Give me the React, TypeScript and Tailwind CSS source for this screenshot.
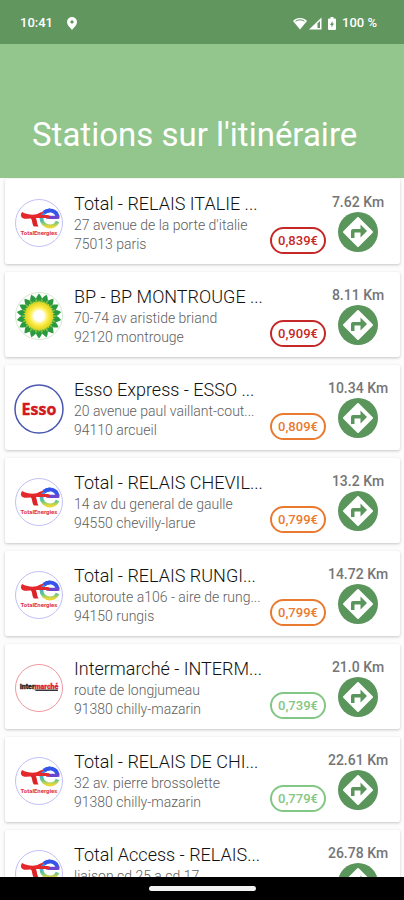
import React from 'react';
import clsx from 'clsx';

type Brand = 'total' | 'bp' | 'esso' | 'intermarche';
type Level = 'high' | 'medium' | 'low';

interface Station {
  name: string;
  street: string;
  city: string;
  distance: string;
  price: string;
  level: Level;
  brand: Brand;
}

const stations: Station[] = [
  {
    name: 'Total - RELAIS ITALIE ...',
    street: "27 avenue de la porte d'italie",
    city: '75013 paris',
    distance: '7.62 Km',
    price: '0,839€',
    level: 'high',
    brand: 'total',
  },
  {
    name: 'BP - BP MONTROUGE ...',
    street: '70-74 av aristide briand',
    city: '92120 montrouge',
    distance: '8.11 Km',
    price: '0,909€',
    level: 'high',
    brand: 'bp',
  },
  {
    name: 'Esso Express - ESSO ...',
    street: '20 avenue paul vaillant-cout...',
    city: '94110 arcueil',
    distance: '10.34 Km',
    price: '0,809€',
    level: 'medium',
    brand: 'esso',
  },
  {
    name: 'Total - RELAIS CHEVIL...',
    street: '14 av du general de gaulle',
    city: '94550 chevilly-larue',
    distance: '13.2 Km',
    price: '0,799€',
    level: 'medium',
    brand: 'total',
  },
  {
    name: 'Total - RELAIS RUNGI...',
    street: 'autoroute a106 - aire de rung...',
    city: '94150 rungis',
    distance: '14.72 Km',
    price: '0,799€',
    level: 'medium',
    brand: 'total',
  },
  {
    name: 'Intermarché - INTERM...',
    street: 'route de longjumeau',
    city: '91380 chilly-mazarin',
    distance: '21.0 Km',
    price: '0,739€',
    level: 'low',
    brand: 'intermarche',
  },
  {
    name: 'Total - RELAIS DE CHI...',
    street: '32 av. pierre brossolette',
    city: '91380 chilly-mazarin',
    distance: '22.61 Km',
    price: '0,779€',
    level: 'low',
    brand: 'total',
  },
  {
    name: 'Total Access - RELAIS...',
    street: 'liaison cd 25 a cd 17',
    city: '91380 chilly-mazarin',
    distance: '26.78 Km',
    price: '0,779€',
    level: 'low',
    brand: 'total',
  },
];

const priceColors: Record<Level, string> = {
  high: 'border-[#c62828] text-[#c62828]',
  medium: 'border-[#ea7a30] text-[#ea7a30]',
  low: 'border-[#82c784] text-[#82c784]',
};

function TotalLogo() {
  return (
    <svg viewBox="0 0 50 50" className="size-[50px]" aria-label="TotalEnergies">
      <defs>
        <linearGradient id="total-left" x1="0" y1="0" x2="0" y2="1">
          <stop offset="0" stopColor="#3b6df0" />
          <stop offset="0.4" stopColor="#45a9e4" />
          <stop offset="0.7" stopColor="#5cc493" />
          <stop offset="1" stopColor="#e6d838" />
        </linearGradient>
      </defs>
      <circle cx="25" cy="25" r="23.5" fill="#fff" stroke="#c3c0f4" />
      <path
        d="M36 12.500a8.500 8 0 0 0 0 16c3.500 0 6-1.500 7.500-5"
        fill="none"
        stroke="url(#total-left)"
        strokeWidth="3.800"
      />
      <path
        d="M30 14.500c5-4 13-2 13.500 4.500"
        fill="none"
        stroke="#3454ea"
        strokeWidth="3.800"
      />
      <path d="M32 17.500c5 .6 8 .2 13.400-.3v3.500c-6 .6-9 .2-13.400-.3z" fill="#6a45d0" />
      <path
        d="M8 14c-2.500 4-.5 7 4.500 6.800 8-.3 15-1.300 23-.3v-3c-3-.6-6-.5-8.500-.2l3-3.500c-4 0-5.500 2.500-9 2.800-4.500.3-9-.3-13-2.600z"
        fill="#e5282c"
      />
      <path d="M16 19.500c3 2 1.500 6.500 4 9h4.500c-2-3-1-6-3-9z" fill="#dc2428" />
      <text
        x="25"
        y="37"
        textAnchor="middle"
        fontSize="6"
        fontWeight="700"
        fill="#e0343c"
        fontFamily="Roboto, sans-serif"
      >
        TotalEnergies
      </text>
    </svg>
  );
}

function BpLogo() {
  const ring = (count: number, offset: number) =>
    Array.from({ length: count }, (_, i) => (i * 360) / count + offset);

  return (
    <svg viewBox="0 0 50 50" className="size-[50px]" aria-label="BP">
      <defs>
        <radialGradient id="bp-sun">
          <stop offset="0.35" stopColor="#fff" />
          <stop offset="0.6" stopColor="#fdf05a" />
          <stop offset="0.85" stopColor="#f0dc28" />
          <stop offset="1" stopColor="#d0d62e" />
        </radialGradient>
      </defs>
      <circle cx="25" cy="25" r="23.5" fill="#fff" stroke="#d5e8d0" />
      {ring(18, 0).map((a) => (
        <path
          key={a}
          d="M25 2.500c3.500 4 4.500 8 3 13h-6c-1.500-5-.5-9 3-13z"
          fill="#2a9a40"
          transform={`rotate(${a} 25 25)`}
        />
      ))}
      {ring(18, 10).map((a) => (
        <path
          key={a}
          d="M25 7c1.500 3 2 5 1.200 10h-2.400c-.8-5-.3-7 1.200-10z"
          fill="#7fbf3a"
          transform={`rotate(${a} 25 25)`}
        />
      ))}
      {ring(18, 0).map((a) => (
        <path
          key={a}
          d="M25 9l2.500 6-.5 9h-4l-.5-9z"
          fill="#dcd82c"
          transform={`rotate(${a} 25 25)`}
        />
      ))}
      <circle cx="25" cy="25" r="14" fill="url(#bp-sun)" />
    </svg>
  );
}

function EssoLogo() {
  return (
    <svg viewBox="0 0 50 50" className="size-[50px]" aria-label="Esso">
      <circle cx="25" cy="25" r="24" fill="#fff" stroke="#4a58b0" strokeWidth="1.500" />
      <text
        x="25"
        y="31"
        textAnchor="middle"
        fontSize="16"
        fontWeight="700"
        fill="#d3191f"
        stroke="#d3191f"
        strokeWidth="0.4"
        fontFamily="'Open Sans', sans-serif"
      >
        Esso
      </text>
    </svg>
  );
}

function IntermarcheLogo() {
  return (
    <svg viewBox="0 0 50 50" className="size-[50px]" aria-label="Intermarché">
      <circle cx="25" cy="25" r="23.5" fill="#fff" stroke="#ef98a0" />
      <text
        x="25"
        y="26"
        textAnchor="middle"
        fontSize="7"
        fontWeight="900"
        fill="#222"
        stroke="#222"
        strokeWidth="0.3"
        fontFamily="Roboto, sans-serif"
      >
        Inter
        <tspan fill="#e0202c" stroke="#e0202c">
          marché
        </tspan>
      </text>
      <path d="M20 26.500h24v1.500h-22z" fill="#38383c" />
    </svg>
  );
}

const logos: Record<Brand, React.ReactNode> = {
  total: <TotalLogo />,
  bp: <BpLogo />,
  esso: <EssoLogo />,
  intermarche: <IntermarcheLogo />,
};

function DirectionsIcon() {
  return (
    <svg viewBox="0 0 40 40" className="size-10">
      <circle cx="20" cy="20" r="20" fill="#5a965c" />
      <path
        d="M20 6l14 14-14 14L6 20z"
        fill="#fff"
        stroke="#fff"
        strokeWidth="2"
        strokeLinejoin="round"
      />
      <path d="M13 26v-7a2 2 0 0 1 2-2h7.500V12.500l6.500 6.500-6.500 6.500v-5H16.500V26z" fill="#5a965c" />
    </svg>
  );
}

function StatusBar() {
  return (
    <div className="flex h-11 shrink-0 items-center justify-between bg-[#61965f] pt-[2px] pr-[27px] pl-5 text-[13px] font-medium text-white">
      <div className="flex items-center gap-[14px]">
        <span>10:41</span>
        <svg viewBox="0 0 10 13" className="h-[13px] w-[10px]">
          <path
            fillRule="evenodd"
            fill="#fff"
            d="M5 0a5 5 0 0 1 5 5c0 3-3 5.500-5 8-2-2.500-5-5-5-8a5 5 0 0 1 5-5zm0 3.200a1.700 1.700 0 1 0 0 3.400 1.700 1.700 0 0 0 0-3.400z"
          />
        </svg>
      </div>
      <div className="flex items-center gap-[6px]">
        <svg viewBox="0 0 29 13" className="h-[13px] w-[29px]">
          <path d="M0 4C3 0 11 0 14 4L7 12.500z" fill="#fff" />
          <path d="M2.500 4.200c3-1.800 6-1.800 9 0" fill="none" stroke="#61965f" />
          <path d="M28.500 0.500v12H16z" fill="#fff" />
          <path d="M24.500 6.500v4.500h2.500V4z" fill="#61965f" />
        </svg>
        <svg viewBox="0 0 8 13" className="h-[13px] w-2">
          <path
            d="M2.500 0h3v1.500H7a1 1 0 0 1 1 1V12a1 1 0 0 1-1 1H1a1 1 0 0 1-1-1V2.500a1 1 0 0 1 1-1h1.500z"
            fill="#fff"
          />
          <path d="M4.500 4L2 8h1.500v2.500L6 6.500H4.500z" fill="#61965f" />
        </svg>
        <span>100 %</span>
      </div>
    </div>
  );
}

function StationCard({ station }: { station: Station }) {
  return (
    <li className="flex h-[85px] shrink-0 rounded-xs bg-white pr-[22px] pl-[9px] shadow-[0_1px_3px_rgba(0,0,0,0.22)]">
      <div className="flex shrink-0 items-center pt-[2px]">{logos[station.brand]}</div>
      <div className="min-w-0 flex-1 pt-[13px] pl-[10px] whitespace-nowrap">
        <h2 className="text-lg leading-6 font-light text-[#111]">{station.name}</h2>
        <p className="text-sm leading-[19px] font-light text-[#606060]">{station.street}</p>
        <p className="text-sm leading-[19px] font-light text-[#606060]">{station.city}</p>
      </div>
      <div className="flex shrink-0 items-end pr-3 pb-[10px]">
        <span
          className={clsx(
            'flex h-[27px] w-14 items-center justify-center rounded-full border-2 text-[13px] font-medium',
            priceColors[station.level],
          )}
        >
          {station.price}
        </span>
      </div>
      <div className="flex w-10 shrink-0 flex-col items-center pt-[13px]">
        <span className="text-sm leading-5 font-medium whitespace-nowrap text-[#757575]">
          {station.distance}
        </span>
        <button type="button" aria-label={`Itinéraire vers ${station.name}`}>
          <DirectionsIcon />
        </button>
      </div>
    </li>
  );
}

function App() {
  return (
    <div className="flex h-screen flex-col overflow-hidden bg-[#fcfcfc] font-[Roboto,sans-serif]">
      <StatusBar />
      <header className="flex h-[134px] shrink-0 items-end bg-[#92c68c] px-8 pb-[23px]">
        <h1 className="text-[33px] leading-10 whitespace-nowrap text-white">
          Stations sur l'itinéraire
        </h1>
      </header>
      <main className="min-h-0 flex-1 overflow-hidden">
        <ul className="flex flex-col gap-2 pt-px pr-1 pl-[5px]">
          {stations.map((station) => (
            <StationCard key={station.name} station={station} />
          ))}
        </ul>
      </main>
      <footer className="flex h-[23px] shrink-0 items-center justify-center bg-black">
        <div className="h-[5px] w-[107px] rounded-full bg-[#f2f2f2]" />
      </footer>
    </div>
  );
}

export default App;
